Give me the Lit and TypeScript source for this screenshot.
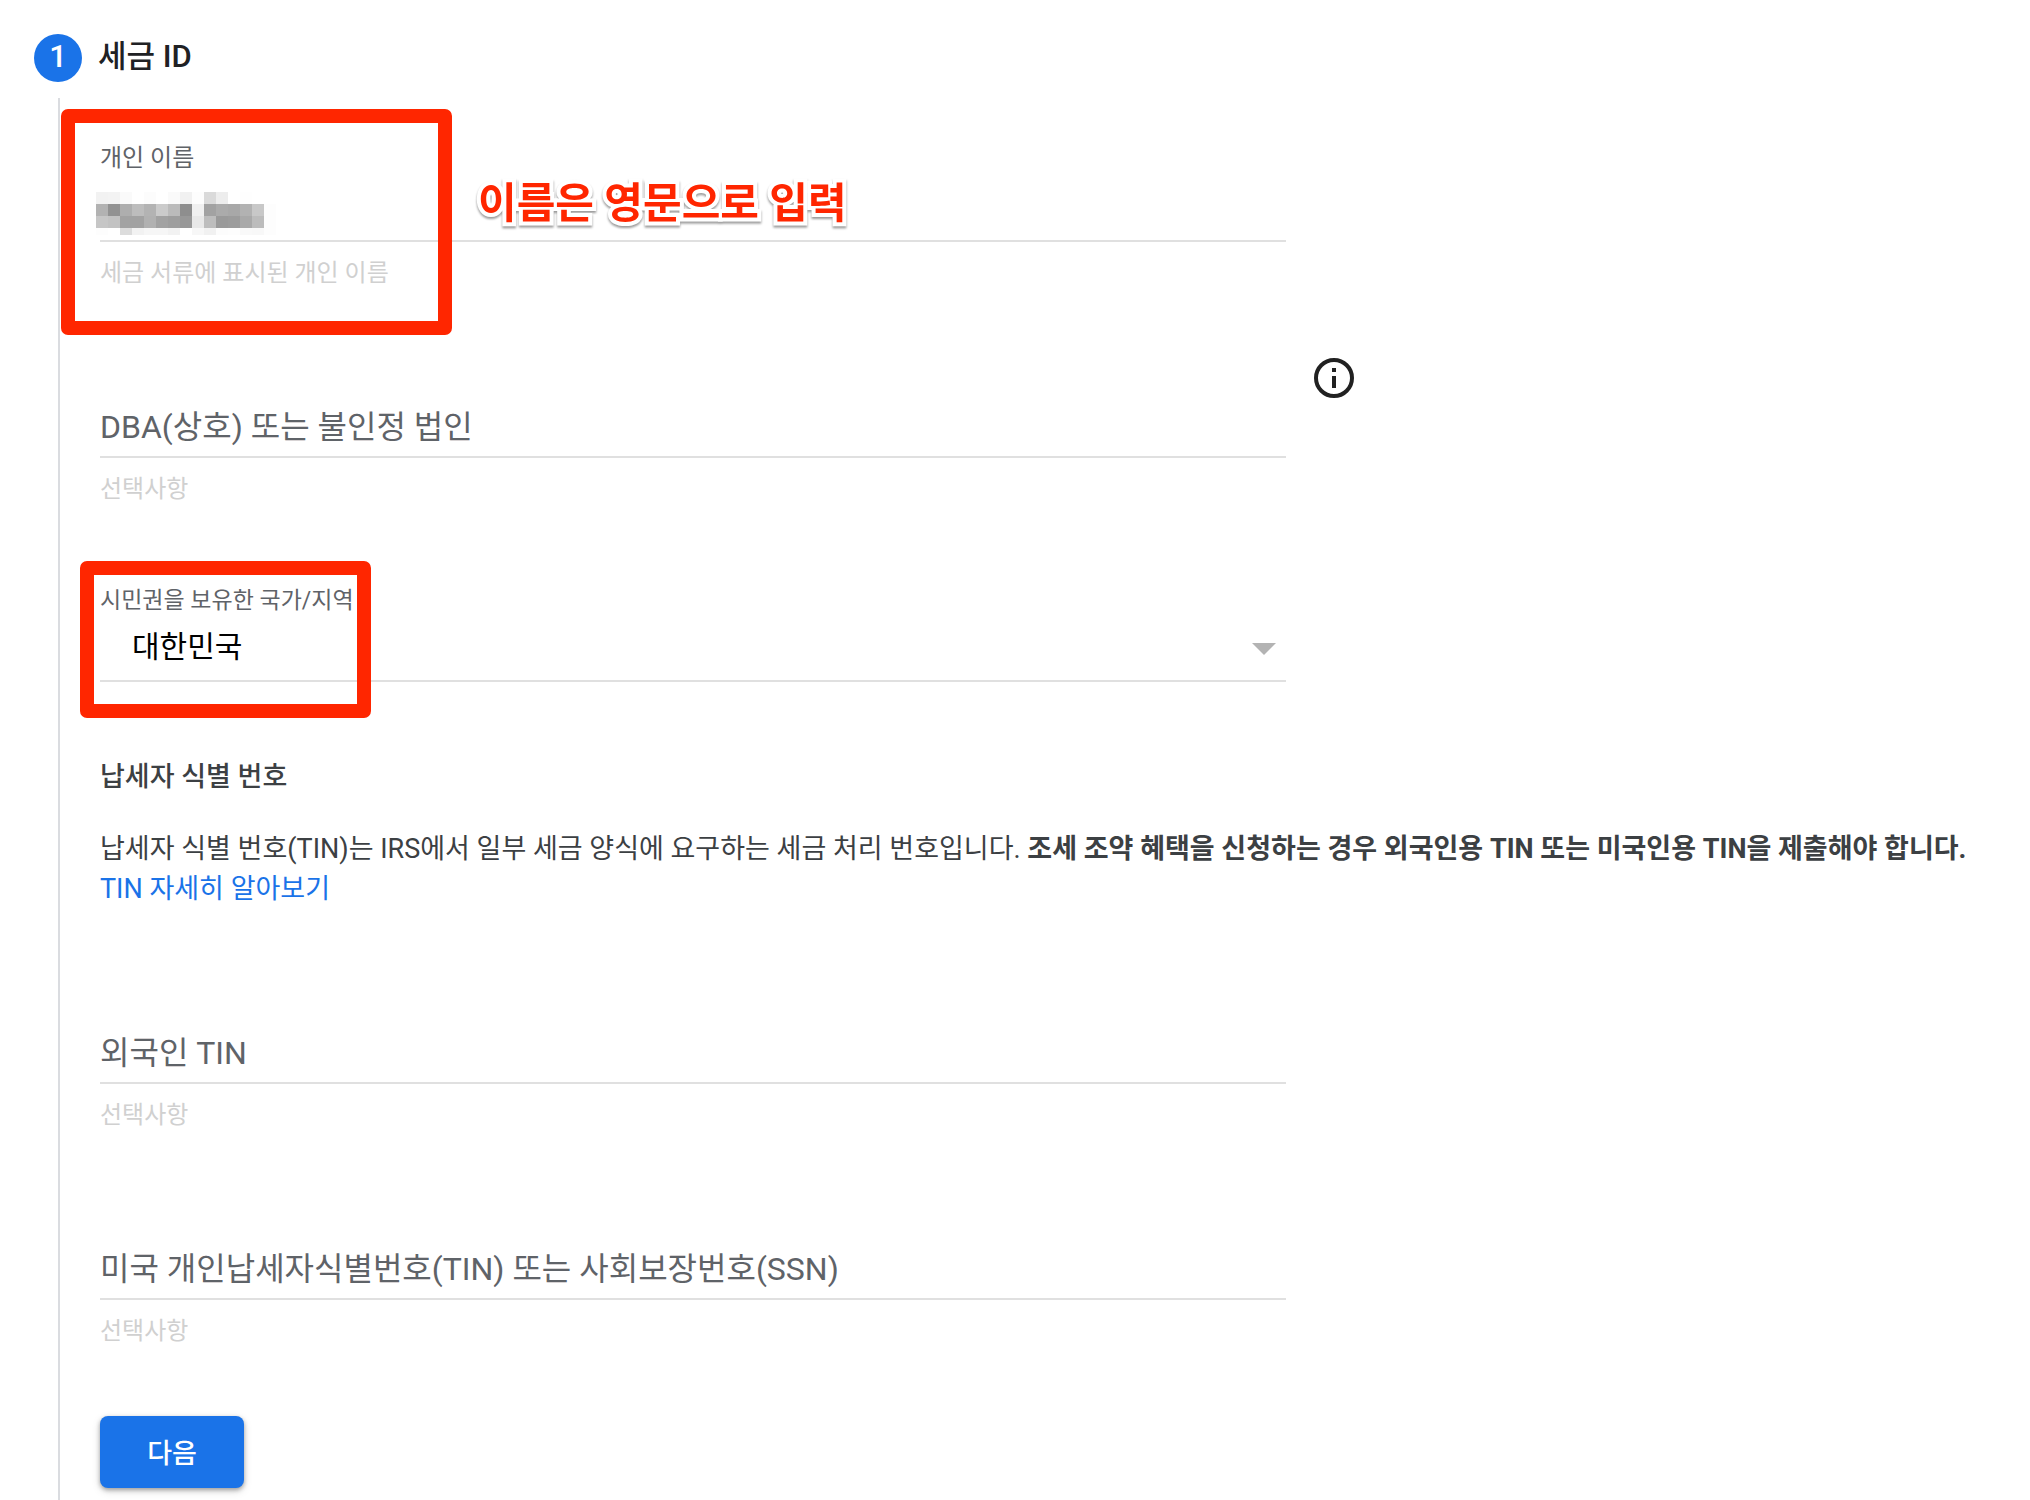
import { LitElement, html, css, svg, nothing } from "lit";
import { customElement, property } from "lit/decorators.js";

const base = css`
  * {
    box-sizing: border-box;
  }
  input,
  select,
  button {
    font: inherit;
    margin: 0;
  }
  .helper {
    margin: 15px 0 0;
    font-size: 24px;
    line-height: 32px;
    color: #d0d0d0;
  }
`;

@customElement("text-field")
export class TextField extends LitElement {
  @property() label = "";
  @property() helper = "";

  static styles = [
    base,
    css`
      :host {
        display: block;
        padding-top: 101px;
      }
      .control {
        display: grid;
        height: 68px;
        border-bottom: 2px solid #e0e0e0;
      }
      .label,
      .input {
        grid-area: 1 / 1;
      }
      .label {
        padding-top: 17px;
        font-size: 32px;
        line-height: 40px;
        color: #5f6368;
        pointer-events: none;
      }
      .input {
        width: 100%;
        padding: 0;
        border: 0;
        outline: 0;
        background: transparent;
        font-size: 32px;
      }
    `,
  ];

  render() {
    return html`
      <div class="control">
        <input class="input" id="input" type="text" aria-describedby="helper" />
        <label class="label" for="input">${this.label}</label>
      </div>
      <p class="helper" id="helper">${this.helper}</p>
    `;
  }
}

const MOSAIC: string[][] = [
  ["f2", "f3", "fa", "ff", "fc", "ff", "fa", "f1", "fd", "da", "ed", "ff", "fe", "ff", "ff"],
  ["b2", "92", "ae", "bd", "b3", "cb", "bb", "8e", "f0", "a2", "ab", "a8", "b2", "c8", "fd"],
  ["c6", "c2", "a2", "a2", "b1", "a2", "9e", "98", "e8", "bd", "9a", "9c", "a9", "bc", "fd"],
  ["fd", "ff", "dc", "f2", "f6", "f6", "f2", "ff", "f7", "f1", "fc", "fd", "f9", "f8", "fd"],
];

@customElement("app-root")
export class AppRoot extends LitElement {
  static styles = [
    base,
    css`
      :host {
        display: block;
        font-family: Roboto, "Noto Sans CJK KR", sans-serif;
        color: #3c4043;
        background: #fff;
      }
      .page {
        display: flex;
        flex-direction: column;
        min-height: 100vh;
      }
      .step-head {
        display: flex;
        align-items: flex-start;
        gap: 16px;
        padding: 34px 34px 16px;
      }
      .step-number {
        width: 48px;
        height: 48px;
        border-radius: 50%;
        background: #1a73e8;
        color: #fff;
        font-size: 31px;
        line-height: 46px;
        font-weight: 500;
        text-align: center;
      }
      .step-title {
        margin: 0;
        font-size: 31px;
        line-height: 46px;
        font-weight: 500;
        color: #202124;
      }
      .step-body {
        flex: 1;
        margin-left: 58px;
        padding: 0 40px 12px;
        border-left: 2px solid #dadce0;
      }
      .field {
        position: relative;
        width: 100%;
        max-width: 1186px;
      }
      .name {
        padding-top: 44px;
      }
      .country {
        padding-top: 80px;
      }
      .small-label {
        display: block;
        font-size: 24px;
        line-height: 32px;
        color: #5f6368;
      }
      .country .small-label {
        font-size: 23px;
      }
      .name-control {
        position: relative;
        border-bottom: 2px solid #e0e0e0;
      }
      .name-input {
        display: block;
        width: 100%;
        height: 66px;
        padding: 0;
        border: 0;
        outline: 0;
        background: transparent;
        font-size: 32px;
      }
      .mosaic {
        position: absolute;
        left: -4px;
        top: 18px;
      }
      .frame {
        position: absolute;
        border: 14px solid #ff2600;
        border-radius: 7px;
        pointer-events: none;
      }
      .name .frame {
        left: -39px;
        top: 11px;
        width: 391px;
        height: 226px;
      }
      .country .frame {
        left: -20px;
        top: 56px;
        width: 291px;
        height: 157px;
      }
      .note {
        position: absolute;
        left: 378px;
        top: 78px;
        margin: 0;
        font-size: 42px;
        line-height: 56px;
        font-weight: 700;
        white-space: nowrap;
        color: #ff2600;
        -webkit-text-stroke: 8px #fff;
        paint-order: stroke fill;
        filter: drop-shadow(0 2px 1px rgba(0, 0, 0, 0.4));
      }
      .with-info {
        display: flex;
        align-items: flex-start;
        gap: 28px;
      }
      .with-info text-field {
        flex: 0 1 1186px;
      }
      .info {
        flex: none;
        width: 40px;
        height: 40px;
        margin-top: 69px;
        padding: 0;
        border: 0;
        background: none;
      }
      .info svg {
        display: block;
      }
      .select-wrap {
        display: grid;
        align-items: center;
        border-bottom: 2px solid #e0e0e0;
      }
      .select {
        grid-area: 1 / 1;
        appearance: none;
        width: 100%;
        height: 63px;
        padding: 0 32px 4px;
        border: 0;
        outline: 0;
        background: transparent;
        font-size: 30px;
        color: #000;
      }
      .caret {
        grid-area: 1 / 1;
        justify-self: end;
        margin-right: 10px;
        pointer-events: none;
      }
      .tin {
        padding: 75px 0 6px;
        font-size: 27px;
        line-height: 40px;
      }
      .tin-title {
        margin: 0 0 32px;
        font-size: 27px;
        font-weight: 500;
      }
      .tin-text {
        margin: 0;
      }
      .tin-link {
        display: block;
        width: fit-content;
        color: #1a73e8;
        text-decoration: none;
      }
      .next {
        display: block;
        width: 144px;
        height: 72px;
        margin-top: 69px;
        padding: 0 0 2px;
        border: 0;
        border-radius: 8px;
        background: #1a73e8;
        color: #fff;
        font-size: 27px;
        font-weight: 500;
        box-shadow: 0 2px 4px rgba(0, 0, 0, 0.3), 0 3px 8px rgba(0, 0, 0, 0.15);
      }
    `,
  ];

  private renderMosaic() {
    return html`<svg class="mosaic" width="180" height="43" viewBox="0 0 180 43" shape-rendering="crispEdges" aria-hidden="true">
      ${MOSAIC.map((row, y) =>
        row.map((v, x) =>
          v === "ff"
            ? nothing
            : svg`<rect x=${x * 12} y=${y * 12} width="12" height="12" fill=${`#${v}${v}${v}`} />`,
        ),
      )}
    </svg>`;
  }

  render() {
    return html`
      <main class="page">
        <header class="step-head">
          <span class="step-number">1</span>
          <h1 class="step-title">세금 ID</h1>
        </header>
        <form class="step-body" @submit=${(e: Event) => e.preventDefault()}>
          <div class="field name">
            <label class="small-label" for="name">개인 이름</label>
            <div class="name-control">
              <input class="name-input" id="name" type="text" aria-describedby="name-helper" />
              ${this.renderMosaic()}
            </div>
            <p class="helper" id="name-helper">세금 서류에 표시된 개인 이름</p>
            <div class="frame"></div>
            <p class="note">이름은 영문으로 입력</p>
          </div>

          <div class="with-info">
            <text-field label="DBA(상호) 또는 불인정 법인" helper="선택사항"></text-field>
            <button class="info" type="button" aria-label="정보">
              <svg width="40" height="40" viewBox="0 0 40 40" aria-hidden="true">
                <circle cx="20" cy="20" r="18" fill="none" stroke="#212121" stroke-width="4" />
                <path d="M18 10h4v4h-4zM18 18h4v12h-4z" fill="#212121" />
              </svg>
            </button>
          </div>

          <div class="field country">
            <label class="small-label" for="country">시민권을 보유한 국가/지역</label>
            <div class="select-wrap">
              <select class="select" id="country">
                <option>대한민국</option>
              </select>
              <svg class="caret" width="24" height="12" viewBox="0 0 24 12" aria-hidden="true">
                <path d="M0 0h24L12 12z" fill="#b3b3b3" />
              </svg>
            </div>
            <div class="frame"></div>
          </div>

          <section class="tin">
            <h2 class="tin-title">납세자 식별 번호</h2>
            <p class="tin-text">
              납세자 식별 번호(TIN)는 IRS에서 일부 세금 양식에 요구하는 세금 처리 번호입니다.
              <b>조세 조약 혜택을 신청하는 경우 외국인용 TIN 또는 미국인용 TIN을 제출해야 합니다.</b>
              <a class="tin-link" href="#tin">TIN 자세히 알아보기</a>
            </p>
          </section>

          <text-field class="field" label="외국인 TIN" helper="선택사항"></text-field>
          <text-field
            class="field"
            label="미국 개인납세자식별번호(TIN) 또는 사회보장번호(SSN)"
            helper="선택사항"
          ></text-field>

          <button class="next" type="submit">다음</button>
        </form>
      </main>
    `;
  }
}
